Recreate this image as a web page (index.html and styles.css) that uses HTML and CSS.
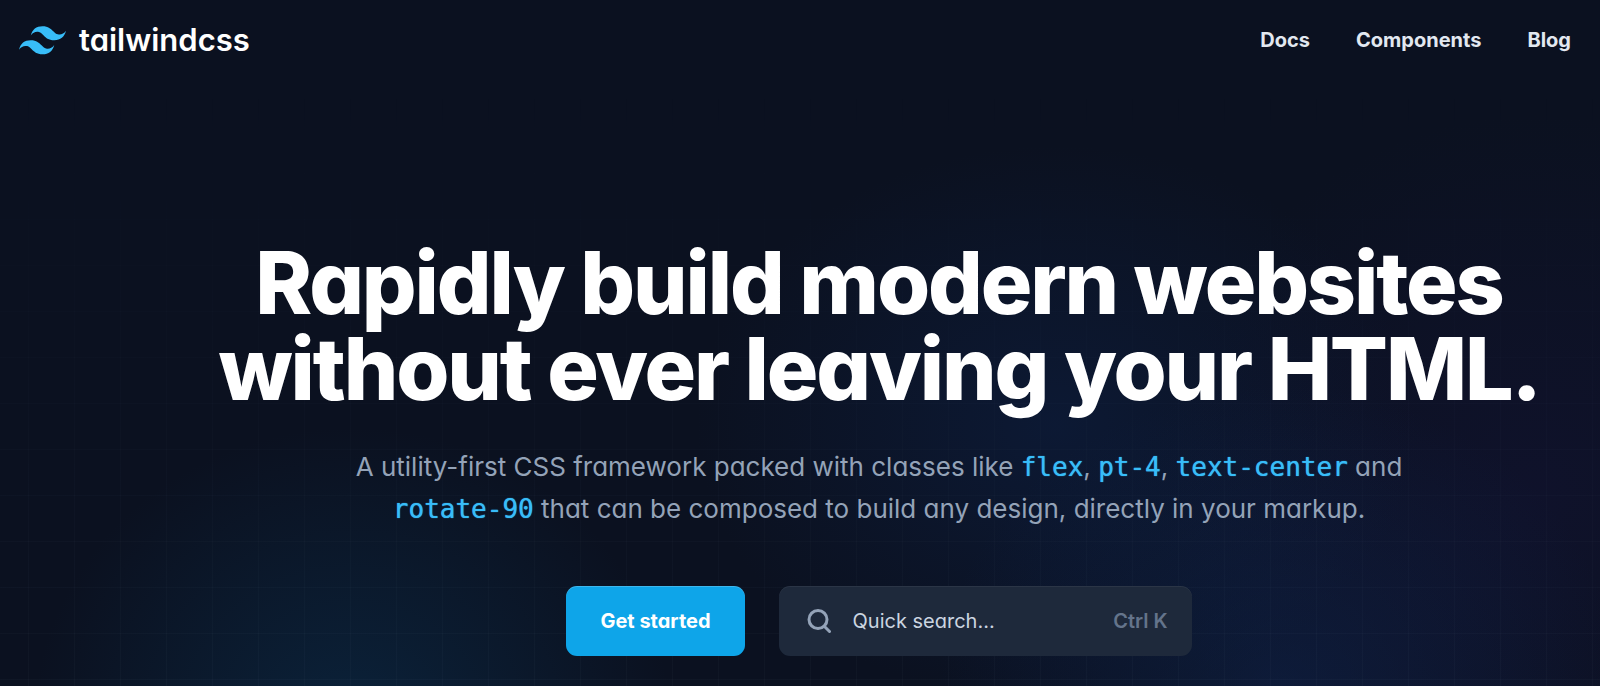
FILE: index.html
```html
<!DOCTYPE html>
<html lang="en">
<head>
<meta charset="utf-8">
<meta name="viewport" content="width=device-width, initial-scale=1">
<title>Tailwind CSS - Rapidly build modern websites without ever leaving your HTML.</title>
<link rel="stylesheet" href="styles.css">
</head>
<body>
<div class="page">
  <header class="header">
    <a class="logo" href="#">
      <svg class="logo-mark" viewBox="0 0 54 33" aria-hidden="true"><path fill="#38bdf8" fill-rule="evenodd" d="M27 0c-7.2 0-11.7 3.6-13.5 10.8 2.7-3.6 5.85-4.95 9.45-4.05 2.054.513 3.522 2.004 5.147 3.653C30.744 13.09 33.808 16.2 40.5 16.2c7.2 0 11.7-3.6 13.5-10.8-2.7 3.6-5.85 4.95-9.45 4.05-2.054-.513-3.522-2.004-5.147-3.653C36.756 3.11 33.692 0 27 0zM13.5 16.2C6.3 16.2 1.8 19.8 0 27c2.7-3.6 5.85-4.95 9.45-4.05 2.054.514 3.522 2.004 5.147 3.653C17.244 29.29 20.308 32.4 27 32.4c7.2 0 11.7-3.6 13.5-10.8-2.7 3.6-5.85 4.95-9.45 4.05-2.054-.513-3.522-2.004-5.147-3.653C23.256 19.31 20.192 16.2 13.5 16.2z"/></svg>
      <span class="logo-text">tailwindcss</span>
    </a>
    <nav class="nav">
      <a href="#">Docs</a>
      <a href="#">Components</a>
      <a href="#">Blog</a>
    </nav>
  </header>
  <main class="hero">
    <h1 class="title">Rapidly build modern websites <br>without ever leaving your HTML.</h1>
    <p class="lead">A utility-first CSS framework packed with classes like <code>flex</code>, <code>pt-4</code>, <code>text-center</code> and <code>rotate-90</code> that can be composed to build any design, directly in your markup.</p>
    <div class="actions">
      <a class="start" href="#">Get started</a>
      <button class="search" type="button">
        <svg class="search-icon" viewBox="0 0 24 24" fill="none" stroke="currentColor" stroke-width="3" stroke-linecap="round" aria-hidden="true"><circle cx="11" cy="10.5" r="9"/><path d="m17.5 17.5 5 5"/></svg>
        <span>Quick search...</span>
        <span class="shortcut">Ctrl K</span>
      </button>
    </div>
  </main>
</div>
</body>
</html>
```
FILE: styles.css
```css
* { box-sizing: border-box; }

body {
  margin: 0;
  background: #0b1120;
  color: #fff;
  font-family: Inter, "Liberation Sans", sans-serif;
  font-feature-settings: "cv11";
  font-size: 20px;
  line-height: 28px;
}

a { color: inherit; text-decoration: none; }

.page {
  position: relative;
  isolation: isolate;
  min-height: 100vh;
  background:
    radial-gradient(ellipse 320px 300px at 22% 106%, rgba(10, 54, 88, .46), transparent),
    radial-gradient(ellipse 340px 300px at 80% 100%, rgba(16, 42, 92, .4), transparent),
    radial-gradient(ellipse 360px 280px at 66% 62%, rgba(14, 38, 84, .38), transparent),
    radial-gradient(ellipse 380px 380px at 96% 72%, rgba(24, 20, 66, .32), transparent);
}

/* Faint grid that fades in from the top */
.page::before {
  content: "";
  position: absolute;
  inset: 0;
  z-index: -1;
  background-image:
    linear-gradient(to right, rgba(148, 163, 184, .04) 1px, transparent 1px),
    linear-gradient(to bottom, rgba(148, 163, 184, .04) 1px, transparent 1px);
  background-size: 46px 46px;
  background-position: 28px 35px;
  mask-image: linear-gradient(to bottom, transparent 10%, #000);
}

.header {
  display: flex;
  align-items: center;
  justify-content: space-between;
  height: 80px;
  padding: 0 29px 0 19px;
}

.logo { display: flex; align-items: center; gap: 13px; }
.logo-mark { width: 47px; height: 29px; }
.logo-text { font-size: 31px; line-height: 40px; font-weight: 600; }

.nav { display: flex; gap: 46px; color: #e2e8f0; font-weight: 700; }

.hero {
  display: flex;
  flex-direction: column;
  align-items: center;
  padding: 160px 0 30px 158px;
  text-align: center;
}

.title {
  margin: 0;
  font-size: 86px;
  line-height: 86px;
  font-weight: 800;
  letter-spacing: -0.025em;
}

.lead {
  max-width: 1100px;
  margin: 34px 0 0;
  color: #94a3b8;
  font-size: 26px;
  line-height: 41px;
}

.lead code {
  color: #38bdf8;
  font-family: "DejaVu Sans Mono", monospace;
  font-size: 26px;
  text-shadow: 0 0 1px #38bdf8;
}

.actions { display: flex; gap: 34px; margin-top: 56px; }

.start,
.search {
  display: flex;
  align-items: center;
  height: 70px;
  border-radius: 11px;
}

.start {
  padding: 0 34px;
  background: #0ea5e9;
  font-weight: 700;
  box-shadow: inset 0 1px 0 rgba(255, 255, 255, .2);
}

.search {
  width: 413px;
  gap: 22px;
  padding: 0 24px 0 28px;
  border: 0;
  background: #1e293b;
  color: #cbd5e1;
  font: inherit;
  font-feature-settings: inherit;
  box-shadow: inset 0 1px 0 rgba(255, 255, 255, .06);
}

.search-icon { width: 24px; height: 24px; color: #94a3b8; }
.shortcut { margin-left: auto; color: #64748b; font-weight: 600; }
```
